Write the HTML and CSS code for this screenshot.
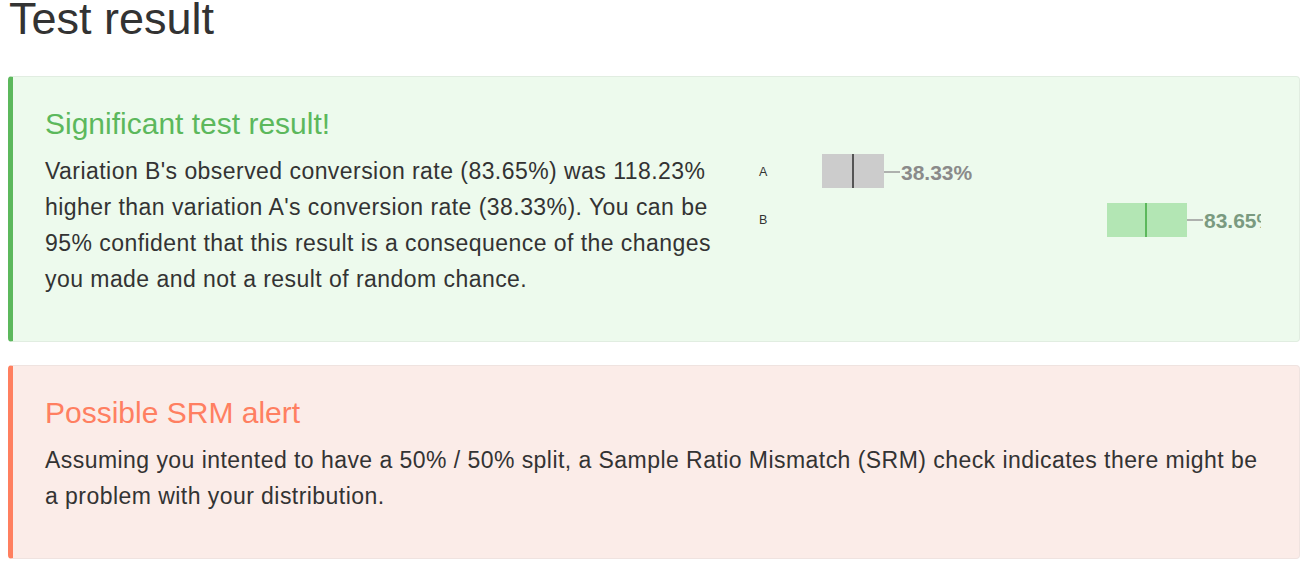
FILE: index.html
```html
<!DOCTYPE html>
<html lang="en">
<head>
<meta charset="utf-8">
<title>Test result</title>
<link rel="stylesheet" href="styles.css">
</head>
<body>
  <h1 class="page-title">Test result</h1>

  <section class="callout callout-success">
    <div class="callout-grid">
      <div class="callout-text">
        <h2 class="callout-title">Significant test result!</h2>
        <p class="callout-body">Variation B's observed conversion rate (83.65%) was 118.23% higher than variation A's conversion rate (38.33%). You can be 95% confident that this result is a consequence of the changes you made and not a result of random chance.</p>
      </div>
      <div class="callout-chart">
        <svg class="chart" width="516" height="150" viewBox="0 0 516 150">
          <text class="chart-label" x="14" y="70.5">A</text>
          <rect x="77" y="49" width="62" height="34" fill="#cccccc"/>
          <line x1="108" y1="49" x2="108" y2="83" stroke="#555555" stroke-width="2"/>
          <line x1="139" y1="67" x2="155" y2="67" stroke="#999999" stroke-width="1.5"/>
          <text class="chart-value value-a" x="156" y="74.5">38.33%</text>

          <text class="chart-label" x="14" y="119">B</text>
          <rect x="362" y="98" width="80" height="34" fill="#b3e6b4"/>
          <line x1="401" y1="98" x2="401" y2="132" stroke="#5cb85c" stroke-width="2"/>
          <line x1="442" y1="115" x2="458" y2="115" stroke="#999999" stroke-width="1.5"/>
          <text class="chart-value value-b" x="459" y="123">83.65%</text>
        </svg>
      </div>
    </div>
  </section>

  <section class="callout callout-warning">
    <h2 class="callout-title">Possible SRM alert</h2>
    <p class="callout-body">Assuming you intented to have a 50% / 50% split, a Sample Ratio Mismatch (SRM) check indicates there might be a problem with your distribution.</p>
  </section>
</body>
</html>
```

FILE: styles.css
```css
html, body {
  background: #ffffff;
}

body {
  margin: 0 8px;
  font-family: "Liberation Sans", Arial, Helvetica, sans-serif;
  color: #333333;
}

.page-title {
  margin: 0 0 38px 0;
  font-size: 45px;
  line-height: 38px;
  font-weight: 400;
  color: #333333;
  padding-left: 1px;
}

.callout {
  border: 1px solid #e3ece3;
  border-left-width: 5px;
  border-radius: 4px;
  padding: 20px 32px 20px 32px;
  margin-bottom: 23px;
  width: 1222px;
}

.callout-success {
  background: #edfaed;
  border-color: #e1ede1;
  border-left-color: #5cb85c;
}

.callout-warning {
  background: #fbece8;
  border-color: #efe3e0;
  border-left-color: #ff7f5f;
}

.callout-grid {
  display: grid;
  grid-template-columns: 700px 1fr;
}

.callout-text {
  padding-right: 6px;
}

.callout-title {
  margin: 10px 0 13px 0;
  font-size: 30px;
  line-height: 33px;
  font-weight: 400;
}

.callout-success .callout-title {
  color: #5cb85c;
}

.callout-warning .callout-title {
  color: #ff7f61;
}

.callout-body {
  margin: 0 0 24px 0;
  font-size: 23px;
  letter-spacing: 0.45px;
  line-height: 36px;
  color: #333333;
}

.callout-chart {
  overflow: hidden;
}

.chart {
  display: block;
  overflow: hidden;
  margin-top: 8px;
}

.chart-label {
  font-family: "Liberation Sans", Arial, sans-serif;
  font-size: 12.5px;
  fill: #333333;
}

.chart-value {
  font-family: "Liberation Sans", Arial, sans-serif;
  font-size: 21px;
  font-weight: 700;
}

.value-a {
  fill: #8a8a8a;
}

.value-b {
  fill: #7a9a80;
}
```
